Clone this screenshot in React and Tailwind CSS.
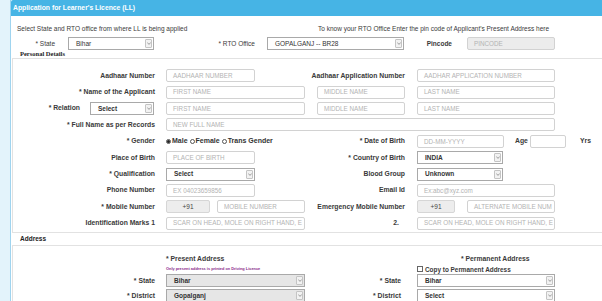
import React from 'react';

const Arrow = () => (
  <div className="absolute right-[1px] top-[1px] w-[7px] h-[9px] border border-[#c4c4c4] bg-[#f2f2f2] rounded-[1px] flex items-center justify-center">
    <svg width="4" height="3" viewBox="0 0 4 3">
      <path d="M0.3 0.5 L2 2.4 L3.7 0.5" fill="none" stroke="#777" strokeWidth="0.7" />
    </svg>
  </div>
);

const Select = ({ className = '', value, gray }) => (
  <div
    className={`relative shrink-0 h-[13px] border border-[#a9a9a9] flex items-center pl-[7px] text-[6.5px] text-[#333] ${
      gray ? 'bg-[#e6e6e6]' : 'bg-white'
    } ${className}`}
  >
    {value}
    <Arrow />
  </div>
);

const Input = ({ className = '', ph, gray }) => (
  <div
    className={`shrink-0 h-[13px] border border-[#d2d2d2] rounded-[2px] flex items-center pl-[6px] text-[6.3px] text-[#b3b3b3] whitespace-nowrap overflow-hidden ${
      gray ? 'bg-[#ececec]' : 'bg-white'
    } ${className}`}
  >
    {ph}
  </div>
);

const Code = ({ className = '' }) => (
  <div className={`shrink-0 h-[13px] border border-[#d6d6d6] rounded-[2px] bg-[#ededed] flex items-center justify-center text-[6.5px] text-[#444] ${className}`}>
    +91
  </div>
);

const Label = ({ children, className = 'w-[142px]' }) => (
  <div className={`${className} shrink-0 text-right font-bold text-[6.8px] text-[#3a3a3a] whitespace-nowrap`}>{children}</div>
);

const Row = ({ label, left, rlabel, right }) => (
  <div className="flex items-center h-[16.4px]">
    {typeof label === 'string' ? <Label>{label}</Label> : label}
    <div className="shrink-0 ml-[11px] w-[139px] flex items-center">{left}</div>
    {typeof rlabel === 'string' ? (
      <Label className="w-[100px]">{rlabel}</Label>
    ) : (
      <div className="shrink-0 w-[100px] flex items-center">{rlabel}</div>
    )}
    <div className="ml-[12px] flex items-center">{right}</div>
  </div>
);

const Radio = ({ on }) => (
  <span className="inline-flex w-[5px] h-[5px] rounded-full border border-[#555] bg-white items-center justify-center mr-[1px]">
    {on && <span className="w-[3px] h-[3px] rounded-full bg-[#222]" />}
  </span>
);

export default function App() {
  return (
    <div className="w-[602px] h-[301px] overflow-hidden flex bg-[#e3f3fb]" style={{ fontFamily: '"Liberation Sans", Arial, sans-serif' }}>
      <div className="w-[10px] shrink-0" />
      <div className="w-[592px] shrink-0 bg-white border-l border-[#9fd4ef]">
        <div className="h-[16px] bg-[#46b4e5] rounded-tl-[2px] flex items-center pl-[2px] text-white font-bold text-[6.8px]">
          Application for Learner's Licence (LL)
        </div>

        <div className="mt-[9px] h-[8px] flex items-center text-[6.5px] text-[#3a3a3a]">
          <div className="pl-[6px] w-[307px] shrink-0">Select State and RTO office from where LL is being applied</div>
          <div className="whitespace-nowrap">To know your RTO Office Enter the pin code of Applicant's Present Address here</div>
        </div>

        <div className="mt-[4px] h-[13px] flex items-center text-[6.5px] text-[#3a3a3a]">
          <div className="w-[44px] shrink-0 text-right">* State</div>
          <Select className="ml-[13px] w-[86px]" value="Bihar" />
          <div className="w-[101px] shrink-0 text-right">* RTO Office</div>
          <Select className="ml-[12px] w-[137px]" value="GOPALGANJ -- BR28" />
          <div className="w-[48px] shrink-0 text-right font-bold">Pincode</div>
          <Input className="ml-[15px] w-[88px]" ph="PINCODE" gray />
        </div>

        <div
          className="h-[7px] leading-[7px] pl-[9px] text-[6.5px] font-bold text-[#222]"
          style={{ fontFamily: '"Liberation Serif", serif' }}
        >
          Personal Details
        </div>

        <div className="mt-[1px] ml-[1px] w-[600px] border border-[#e2e2e2] pt-[8.5px] pb-[1px]">
          <Row label="Aadhaar Number" left={<Input className="w-[89px]" ph="AADHAAR NUMBER" />} rlabel="Aadhaar Application Number" right={<Input className="w-[138px]" ph="AADHAR APPLICATION NUMBER" />} />
          <Row
            label="* Name of the Applicant"
            left={<Input className="w-[139px]" ph="FIRST NAME" />}
            rlabel={<Input className="ml-[12px] w-[88px]" ph="MIDDLE NAME" />}
            right={<Input className="w-[138px]" ph="LAST NAME" />}
          />
          <Row
            label={
              <div className="w-[142px] shrink-0 flex items-center justify-end">
                <span className="font-bold text-[6.8px] text-[#3a3a3a]">* Relation</span>
                <Select className="ml-[10px] mr-[1px] w-[64px] font-bold" value="Select" />
              </div>
            }
            left={<Input className="w-[139px]" ph="FIRST NAME" />}
            rlabel={<Input className="ml-[12px] w-[88px]" ph="MIDDLE NAME" />}
            right={<Input className="w-[138px]" ph="LAST NAME" />}
          />
          <div className="flex items-center h-[16.4px]">
            <Label>* Full Name as per Records</Label>
            <Input className="ml-[11px] w-[389px]" ph="NEW FULL NAME" />
          </div>
          <Row
            label="* Gender"
            left={
              <div className="flex items-center font-bold text-[7px] text-[#333]">
                <Radio on />Male<span className="ml-[2px]" /><Radio />Female<span className="ml-[2px]" /><Radio />Trans Gender
              </div>
            }
            rlabel="* Date of Birth"
            right={
              <>
                <Input className="w-[87px]" ph="DD-MM-YYYY" />
                <span className="ml-[11px] w-[14px] font-bold text-[6.8px] text-[#3a3a3a]">Age</span>
                <Input className="ml-[1px] w-[36px]" ph="" />
                <span className="ml-[14px] font-bold text-[6.8px] text-[#3a3a3a]">Yrs</span>
              </>
            }
          />
          <Row label="Place of Birth" left={<Input className="w-[89px]" ph="PLACE OF BIRTH" />} rlabel="* Country of Birth" right={<Select className="w-[86px] font-bold" value="INDIA" />} />
          <Row label="* Qualification" left={<Select className="w-[89px] font-bold" value="Select" />} rlabel="Blood Group" right={<Select className="w-[86px] font-bold" value="Unknown" />} />
          <Row label="Phone Number" left={<Input className="w-[89px]" ph="EX 04023659856" />} rlabel="Email Id" right={<Input className="w-[138px]" ph="Ex:abc@xyz.com" />} />
          <Row
            label="* Mobile Number"
            left={
              <>
                <Code className="w-[44px]" />
                <Input className="ml-[7px] w-[88px]" ph="MOBILE NUMBER" />
              </>
            }
            rlabel="Emergency Mobile Number"
            right={
              <>
                <Code className="w-[38px]" />
                <Input className="ml-[12px] w-[88px]" ph="ALTERNATE MOBILE NUM" />
              </>
            }
          />
          <Row
            label="Identification Marks 1"
            left={<Input className="w-[139px]" ph="SCAR ON HEAD, MOLE ON RIGHT HAND, E" />}
            rlabel={<div className="w-[100px] text-right pr-[6px] font-bold text-[6.8px] text-[#3a3a3a]">2.</div>}
            right={<Input className="w-[138px]" ph="SCAR ON HEAD, MOLE ON RIGHT HAND, E" />}
          />
        </div>

        <div className="mt-[2px] h-[8px] leading-[8px] pl-[9px] text-[6.5px] font-bold text-[#222]">Address</div>

        <div className="mt-[2px] ml-[1px] w-[600px] h-[80px] border border-[#e2e2e2] pt-[9px]">
          <div className="flex items-center h-[8px] font-bold text-[6.8px] text-[#3a3a3a]">
            <div className="w-[153px] shrink-0" />
            <div className="w-[251px] shrink-0">* Present Address</div>
            <div className="ml-[44px]">* Permanent Address</div>
          </div>
          <div className="mt-[3px] flex items-center h-[6px]">
            <div className="w-[153px] shrink-0" />
            <div className="w-[251px] shrink-0 text-[3.9px] font-bold text-[#8a2a8a]">Only present address is printed on Driving Licence</div>
            <div className="flex items-center font-bold text-[6.4px] text-[#3a3a3a]">
              <span className="w-[6px] h-[6px] border border-[#666] bg-white mr-[2px]" />
              Copy to Permanent Address
            </div>
          </div>
          <div className="mt-[1px]">
            <div className="flex items-center h-[15px]">
              <Label>* State</Label>
              <Select className="ml-[11px] w-[139px] font-bold" value="Bihar" gray />
              <Label className="w-[96px]">* State</Label>
              <Select className="ml-[16px] w-[138px] font-bold" value="Bihar" />
            </div>
            <div className="flex items-center h-[15px]">
              <Label>* District</Label>
              <Select className="ml-[11px] w-[139px] font-bold" value="Gopalganj" gray />
              <Label className="w-[96px]">* District</Label>
              <Select className="ml-[16px] w-[138px] font-bold" value="Select" />
            </div>
          </div>
        </div>
      </div>
    </div>
  );
}
